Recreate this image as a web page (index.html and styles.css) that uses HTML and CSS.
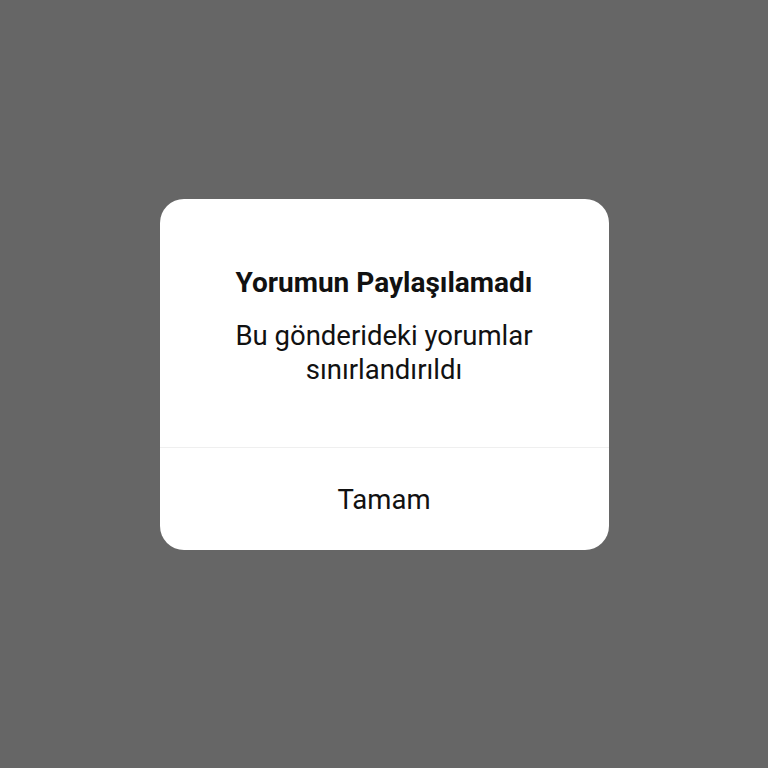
FILE: index.html
```html
<!DOCTYPE html>
<html lang="tr">
<head>
    <meta charset="UTF-8">
    <meta name="viewport" content="width=device-width, initial-scale=1.0">
    <title>Yorumun Paylaşılamadı</title>
    <link rel="stylesheet" href="styles.css">
</head>
<body>
    <div class="overlay">
        <div class="dialog">
            <div class="dialog-body">
                <div class="dialog-title">Yorumun Paylaşılamadı</div>
                <div class="dialog-text">Bu gönderideki yorumlar<br>sınırlandırıldı</div>
            </div>
            <button class="dialog-button">Tamam</button>
        </div>
    </div>
</body>
</html>
```

FILE: styles.css
```css
body {
    margin: 0;
    font-family: Roboto, "Noto Sans", sans-serif;
    background-color: #666666;
}
.overlay {
    height: 768px;
    box-sizing: border-box;
    padding-top: 199px;
}
.dialog {
    width: 449px;
    height: 351px;
    margin: 0 auto;
    background-color: #fff;
    border-radius: 24px;
    display: flex;
    flex-direction: column;
    overflow: hidden;
}
.dialog-body {
    height: 249px;
    box-sizing: border-box;
    padding-top: 68px;
    text-align: center;
    color: #111;
    border-bottom: 1px solid #efefef;
}
.dialog-title {
    font-size: 28px;
    font-weight: bold;
    line-height: 32px;
}
.dialog-text {
    margin-top: 20px;
    font-size: 27.5px;
    line-height: 34px;
}
.dialog-button {
    flex: 1;
    border: none;
    background: none;
    font-family: inherit;
    font-size: 27.5px;
    color: #111;
    padding: 0;
}
```
